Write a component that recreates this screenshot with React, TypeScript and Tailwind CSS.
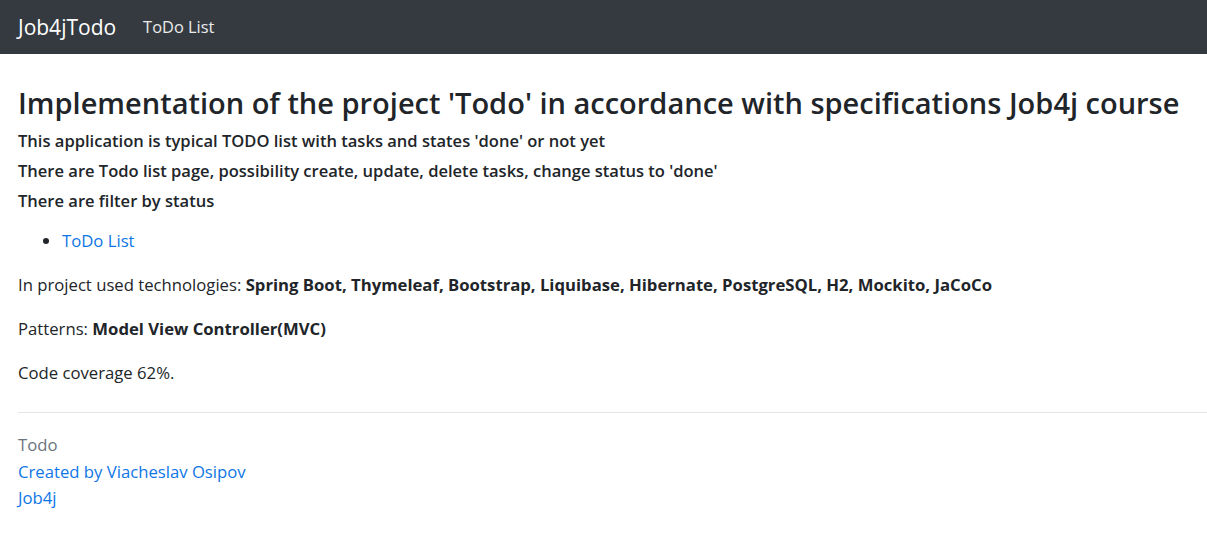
const technologies =
  "Spring Boot, Thymeleaf, Bootstrap, Liquibase, Hibernate, PostgreSQL, H2, Mockito, JaCoCo";

function Navbar(): JSX.Element {
  return (
    <nav className="flex h-[54px] items-center bg-[#343a40] px-[18px]">
      <a href="#" className="mr-[27px] text-[21px] leading-none text-white">
        Job4jTodo
      </a>
      <a href="#" className="text-[16.4px] leading-none text-white/90">
        ToDo List
      </a>
    </nav>
  );
}

export default function App(): JSX.Element {
  return (
    <div
      className="min-h-[558px] bg-white text-[16.7px] text-[#212529]"
      style={{ fontFamily: '"Open Sans", "Noto Sans", sans-serif' }}
    >
      <Navbar />
      <main className="pl-[18px] pt-[32px]">
        <h2 className="mb-[10px] whitespace-nowrap text-[29px] font-semibold leading-[34px]">
          Implementation of the project 'Todo' in accordance with specifications
          Job4j course
        </h2>
        <h6 className="mb-[9px] text-[16.55px] font-semibold leading-[21px]">
          This application is typical TODO list with tasks and states 'done' or
          not yet
        </h6>
        <h6 className="mb-[9px] text-[16.55px] font-semibold leading-[21px]">
          There are Todo list page, possibility create, update, delete tasks,
          change status to 'done'
        </h6>
        <h6 className="mb-[9px] text-[16.55px] font-semibold leading-[21px]">
          There are filter by status
        </h6>
        <ul className="mb-[17.6px] mt-[17px] list-disc pl-[44px] leading-[26.4px]">
          <li>
            <a href="#" className="text-[#0f76e6]">
              ToDo List
            </a>
          </li>
        </ul>
        <p className="mb-[17.6px] leading-[26.4px]">
          In project used technologies: <b className="font-bold">{technologies}</b>
        </p>
        <p className="mb-[17.6px] leading-[26.4px]">
          Patterns: <b className="font-bold">Model View Controller(MVC)</b>
        </p>
        <p className="leading-[26.4px]">Code coverage 62%.</p>
        <hr className="mt-[26px] border-0 border-t border-black/10" />
        <footer className="pt-[19px] leading-[26.4px]">
          <div className="text-[#6c757d]">Todo</div>
          <div>
            <a href="#" className="text-[#0f76e6]">
              Created by Viacheslav Osipov
            </a>
          </div>
          <div>
            <a href="#" className="text-[#0f76e6]">
              Job4j
            </a>
          </div>
        </footer>
      </main>
    </div>
  );
}
